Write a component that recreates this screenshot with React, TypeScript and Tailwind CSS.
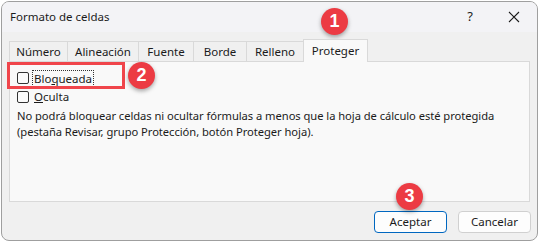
import React from 'react';

const tabs = [
    { label: 'Número', w: 'w-[58px]' },
    { label: 'Alineación', w: 'w-[71px]' },
    { label: 'Fuente', w: 'w-[55px]' },
    { label: 'Borde', w: 'w-[53px]' },
    { label: 'Relleno', w: 'w-[57px]' },
];

const Badge = ({ n, className }: { n: number; className: string }) => (
    <div
        className={`absolute w-[27px] h-[27px] rounded-full bg-[#ec3b43] text-white flex items-center justify-center text-[18px] font-bold shadow-[0_2px_4px_rgba(0,0,0,0.35)] ${className}`}
        style={{ fontFamily: 'Arial, "Liberation Sans", sans-serif' }}
    >
        {n}
    </div>
);

const Checkbox = () => (
    <span className="inline-block w-[12px] h-[12px] rounded-[2px] border border-[#333] bg-[#fbfbfb] shrink-0" />
);

const App = () => {
    return (
        <div
            className="w-[540px] h-[242px] bg-white relative overflow-hidden text-[11.2px] text-[#1b1b1b]"
            style={{ fontFamily: '"Noto Sans", "Open Sans", sans-serif' }}
        >
            <div className="absolute left-[1px] top-[1px] w-[537px] h-[240px] rounded-lg border border-[#9f9f9f] bg-[#f0f0f0] overflow-hidden flex flex-col">
                {/* title bar */}
                <div className="h-[30px] bg-[#f3f3f6] flex items-center pl-[8px] shrink-0 text-[11.5px]">
                    <span className="flex-1">Formato de celdas</span>
                    <span className="w-[20px] text-center text-[13px] mr-[24px]">?</span>
                    <span className="w-[20px] flex justify-center mr-[13px]">
                        <svg width="12" height="12" viewBox="0 0 12 12" stroke="#1b1b1b" strokeWidth="1.1">
                            <path d="M1 1L11 11M11 1L1 11" />
                        </svg>
                    </span>
                </div>

                {/* tabs */}
                <div className="flex items-end pl-[7px] mt-[7px] h-[22px] text-[11.5px]">
                    {tabs.map((t) => (
                        <div
                            key={t.label}
                            className={`${t.w} h-[20px] border-t border-l border-[#d9d9d9] flex items-center justify-center`}
                        >
                            {t.label}
                        </div>
                    ))}
                    <div className="w-[65px] h-[23px] border-t border-x border-[#d9d9d9] bg-[#f9f9f9] flex items-center justify-center relative z-10 -mb-px">
                        Proteger
                    </div>
                </div>

                {/* panel */}
                <div className="mx-[7px] h-[141px] border border-[#d9d9d9] bg-[#f9f9f9] px-[7px] pt-[5px]">
                    <div className="flex items-center gap-[4px] h-[20px] mt-[1px] text-[11.5px]">
                        <Checkbox />
                        <span className="outline outline-1 outline-dotted outline-[#333] px-px leading-[15px]">
                            Blo<span className="underline">q</span>ueada
                        </span>
                    </div>
                    <div className="flex items-center gap-[4px] h-[18px] text-[11.5px]">
                        <Checkbox />
                        <span className="px-px">
                            <span className="underline">O</span>culta
                        </span>
                    </div>
                    <p className="leading-[16px] mt-[2px] whitespace-nowrap tracking-[-0.05px]">
                        No podrá bloquear celdas ni ocultar fórmulas a menos que la hoja de cálculo esté protegida
                        <br />
                        (pestaña Revisar, grupo Protección, botón Proteger hoja).
                    </p>
                </div>

                {/* buttons */}
                <div className="flex justify-end gap-[11px] pr-[6px] mt-[9px] text-[11.5px]">
                    <button className="w-[73px] h-[22px] rounded-[4px] border border-[#0067c0] bg-[#fdfdfd] leading-none">
                        Aceptar
                    </button>
                    <button className="w-[73px] h-[22px] rounded-[4px] border border-[#d0d0d0] bg-[#fdfdfd] leading-none">
                        Cancelar
                    </button>
                </div>
            </div>

            {/* annotations */}
            <div className="absolute left-[7px] top-[62px] w-[118px] h-[27px] border-[3px] border-[#f0454b]" />
            <Badge n={1} className="left-[321px] top-[8px]" />
            <Badge n={2} className="left-[128px] top-[62px]" />
            <Badge n={3} className="left-[396px] top-[183px]" />
        </div>
    );
};

export default App;
